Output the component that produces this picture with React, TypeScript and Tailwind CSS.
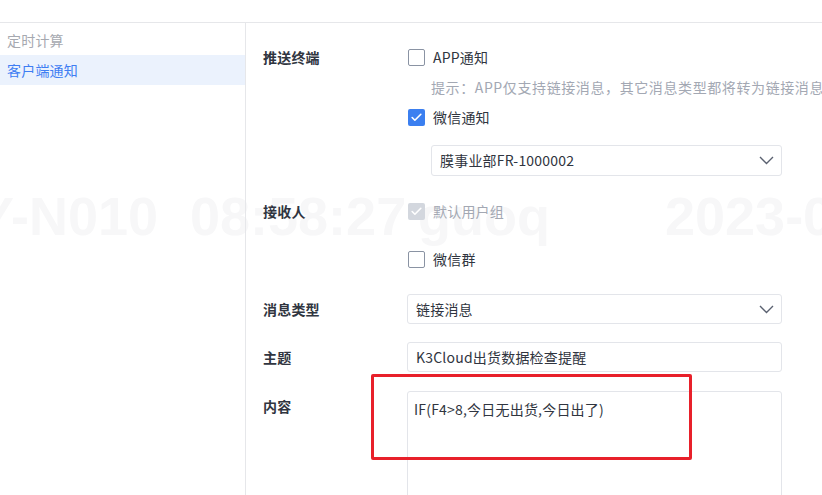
import { Check } from "lucide-react";

const font = { fontFamily: '"Noto Sans CJK SC", "Liberation Sans", sans-serif' };

function Box({ state }: { state: "off" | "on" | "disabled" }) {
  if (state === "on") {
    return (
      <span className="flex h-[17px] w-[17px] items-center justify-center rounded-[2px] bg-[#3b7ff0]">
        <Check className="h-[13px] w-[13px] text-white" strokeWidth={3} />
      </span>
    );
  }
  if (state === "disabled") {
    return (
      <span className="flex h-[17px] w-[17px] items-center justify-center rounded-[2px] bg-[#d3d7de]">
        <Check className="h-[13px] w-[13px] text-white" strokeWidth={3} />
      </span>
    );
  }
  return <span className="h-[17px] w-[17px] rounded-[2px] border border-[#8a93a3] bg-white" />;
}

function Option({ state, label }: { state: "off" | "on" | "disabled"; label: string }) {
  return (
    <div className="flex h-[30px] items-center gap-[8px]">
      <Box state={state} />
      <span className={state === "disabled" ? "text-[#a3a8b3]" : "text-[#303540]"}>{label}</span>
    </div>
  );
}

function Chevron() {
  return (
    <svg width="15" height="9" viewBox="0 0 15 9" fill="none" className="mr-[6px]">
      <polyline points="1,1 7.5,7.5 14,1" stroke="#5a6170" strokeWidth="1.4" />
    </svg>
  );
}

function Select({ value, className }: { value: string; className: string }) {
  return (
    <div
      className={`flex items-center justify-between rounded-[3px] border border-[#e3e5ea] bg-white pl-[8px] pr-[1px] text-[#303540] ${className}`}
    >
      <span>{value}</span>
      <Chevron />
    </div>
  );
}

export default function App() {
  return (
    <div className="relative h-[495px] w-[822px] overflow-hidden bg-white text-[14px] tracking-[0.2px]" style={font}>
      {/* watermark */}
      <div
        className="pointer-events-none absolute left-0 top-[186px] h-[60px] w-full whitespace-nowrap text-[54px] font-bold leading-[60px] tracking-normal text-[#f7f7f8]"
        style={{ fontFamily: '"Liberation Sans", sans-serif' }}
      >
        <span className="absolute left-[-22px]">Y-N010</span>
        <span className="absolute left-[190px]">08:58:27</span>
        <span className="absolute left-[418px]">guoq</span>
        <span className="absolute left-[665px]">2023-08</span>
      </div>

      <div className="relative h-[23px] border-b border-[#e6e7ea]" />

      <div className="relative flex h-[472px]">
        <aside className="w-[246px] shrink-0 border-r border-[#e6e7ea] pt-[2px]">
          <div className="flex h-[30px] items-center pl-[7px] text-[#a6a9b0]">定时计算</div>
          <div className="flex h-[30px] items-center bg-[#ebf2fd] pl-[7px] text-[#3f7ef3]">客户端通知</div>
        </aside>

        <main className="relative flex-1 pl-[17px] pt-[19px]">
          <div className="flex">
            <div className="flex h-[30px] w-[145px] shrink-0 items-center font-bold text-[#303540]">推送终端</div>
            <div className="flex flex-col">
              <Option state="off" label="APP通知" />
              <div className="flex h-[30px] items-center whitespace-nowrap pl-[23px] tracking-[0.6px] text-[#a3a8b3]">
                提示：APP仅支持链接消息，其它消息类型都将转为链接消息
              </div>
              <Option state="on" label="微信通知" />
              <Select value="膜事业部FR-1000002" className="ml-[23px] mt-[13px] h-[31px] w-[351px]" />
            </div>
          </div>

          <div className="mt-[20px] flex">
            <div className="flex h-[30px] w-[145px] shrink-0 items-center font-bold text-[#303540]">接收人</div>
            <div className="flex flex-col gap-[18px]">
              <Option state="disabled" label="默认用户组" />
              <Option state="off" label="微信群" />
            </div>
          </div>

          <div className="mt-[20px] flex items-center">
            <div className="w-[144px] shrink-0 font-bold text-[#303540]">消息类型</div>
            <Select value="链接消息" className="h-[30px] w-[375px]" />
          </div>

          <div className="mt-[18px] flex items-center">
            <div className="w-[144px] shrink-0 font-bold text-[#303540]">主题</div>
            <div className="flex h-[30px] w-[375px] items-center rounded-[3px] border border-[#e3e5ea] bg-white pl-[8px] text-[#303540]">
              K3Cloud出货数据检查提醒
            </div>
          </div>

          <div className="mt-[19px] flex">
            <div className="w-[144px] shrink-0 pt-[5px] font-bold text-[#303540]">内容</div>
            <div className="h-[120px] w-[375px] rounded-[3px] border border-[#e3e5ea] bg-white px-[6px] pt-[7px] text-[#303540]">
              IF(F4&gt;8,今日无出货,今日出了)
            </div>
          </div>

          {/* red annotation */}
          <div className="absolute left-[125px] top-[351px] h-[86px] w-[321px] rounded-[2px] border-[3px] border-[#e8202a]" />
        </main>
      </div>
    </div>
  );
}
